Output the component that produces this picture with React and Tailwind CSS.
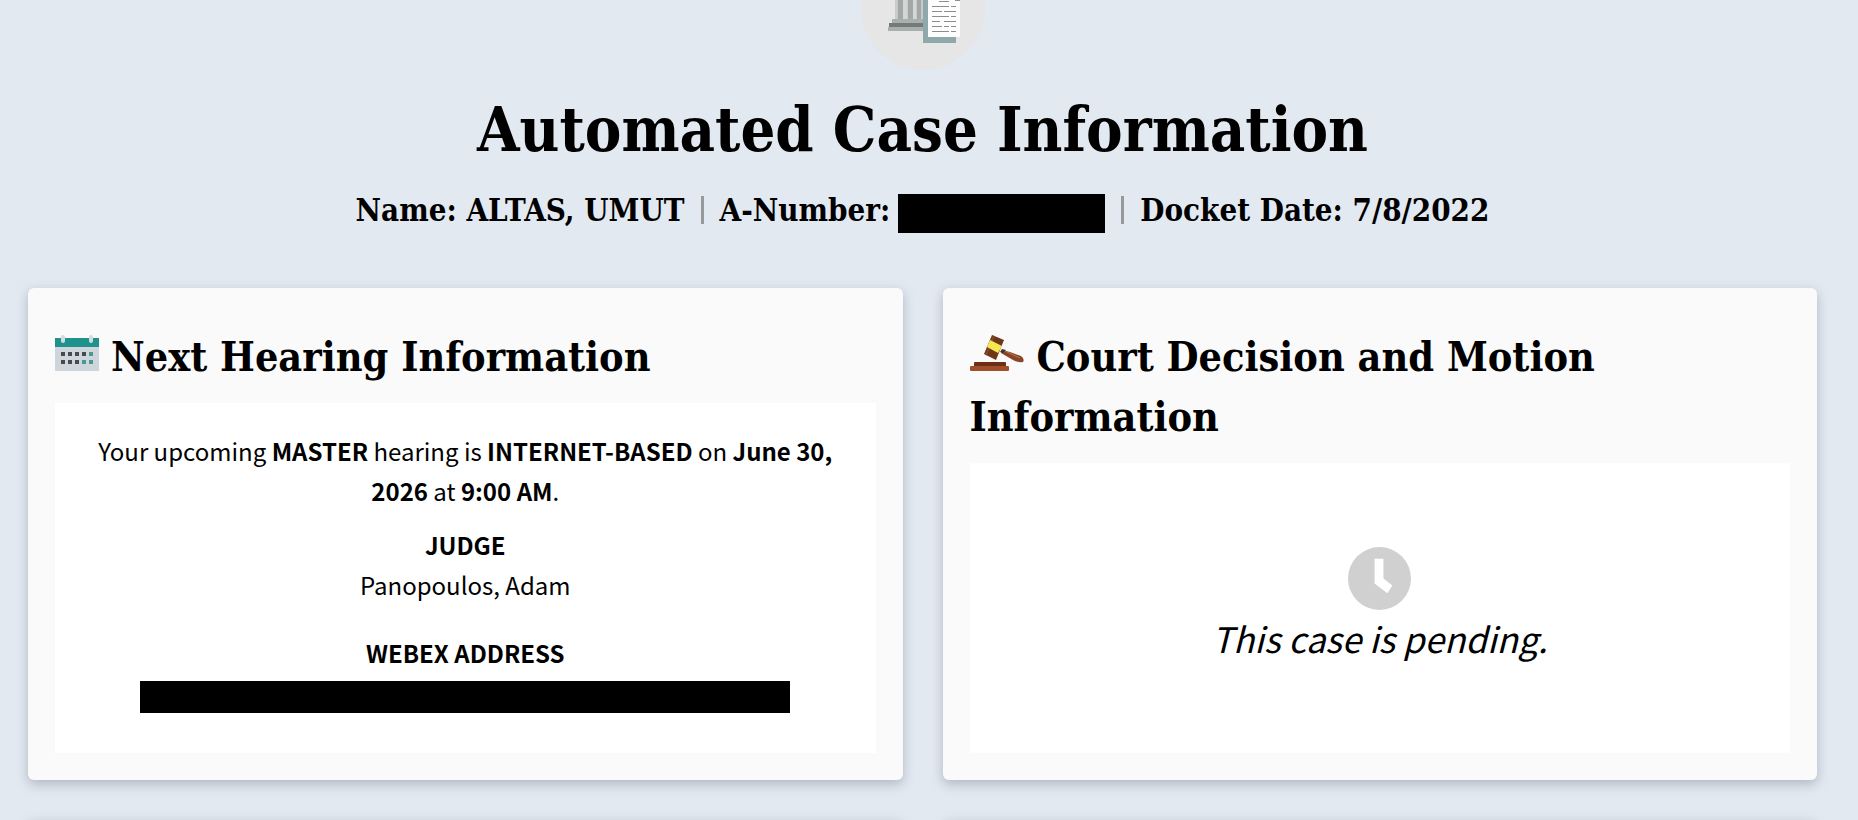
import React from 'react';

const CourtLogo = () => (
    <svg width="124" height="70" viewBox="0 0 124 70" role="img" aria-label="Court records">
        <circle cx="62" cy="8" r="62" fill="#e6e6e6" />
        <rect x="34" y="0" width="52" height="19" fill="#c9cbca" />
        <path d="M37 0h5v19h-5zM47 0h5v19h-5zM56 0h4v19h-4z" fill="#a3a8a6" />
        <path d="M42 0h4v19h-4zM52 0h3v19h-3z" fill="#d5d7d6" />
        <rect x="31" y="19" width="40" height="4" fill="#a9afac" />
        <rect x="28" y="23" width="40" height="4" fill="#747a78" />
        <rect x="27" y="27" width="40" height="4" fill="#a9afac" />
        <rect x="62" y="0" width="33" height="43" fill="#8fa8a9" />
        <rect x="67" y="0" width="32" height="37" fill="#fdfdfd" />
        <g stroke="#8c8c8c" strokeWidth="1">
            <path d="M78 1.5h10M94 0.5h5" />
            <path d="M71 6.5h17M90 6.5h5" />
            <path d="M71 11.5h10M83 11.5h12" />
            <path d="M71 16.5h17M90 16.5h5" />
            <path d="M71 21.5h8M83 21.5h12" />
            <path d="M71 26.5h10M83 26.5h5M90 26.5h5" />
            <path d="M71 31.5h17M90 31.5h5" />
        </g>
    </svg>
);

const CalendarIcon = () => (
    <svg className="mr-3 inline-block align-baseline" width="44" height="36" viewBox="0 0 44 36" aria-hidden="true">
        <rect x="0" y="3" width="44" height="33" fill="#cfd6db" />
        <rect x="0" y="3" width="44" height="9" fill="#1f938b" />
        <rect x="6" y="0" width="4" height="8" rx="2" fill="#cfdde0" />
        <rect x="34" y="0" width="4" height="8" rx="2" fill="#cfdde0" />
        <path d="M6 17h4v4h-4zM13 17h4v4h-4zM20 17h4v4h-4zM27 17h4v4h-4zM6 25h4v4h-4zM13 25h4v4h-4zM20 25h4v4h-4z" fill="#4a4a4c" />
        <path d="M34 17h4v4h-4zM27 25h4v4h-4zM34 25h4v4h-4z" fill="#4a9795" />
    </svg>
);

const GavelIcon = () => (
    <svg className="mr-3 inline-block align-baseline" width="55" height="36" viewBox="0 0 55 36" aria-hidden="true">
        <rect x="4" y="27" width="32" height="5" rx="1" fill="#6d3015" />
        <rect x="0" y="31" width="39" height="5" rx="1" fill="#a04e2c" />
        <path d="M32 15 L40 17 L51 21 Q55 24 53 27 Q49 28 43 25 L31 18 Z" fill="#8a4528" />
        <path d="M35 16 L50 23" stroke="#b47653" strokeWidth="1" />
        <path d="M22 0 L34 5 L26 25 L14 19 Z" fill="#6d3718" />
        <path d="M24 1 L16 20" stroke="#854725" strokeWidth="2" />
        <path d="M20 5 L32 11 L28 18 L17 12 Z" fill="#f8e552" />
        <path d="M32 14l4 1-3 3-3-1z" fill="#3d3a2c" />
    </svg>
);

const ClockIcon = () => (
    <svg width="63" height="63" viewBox="0 0 64 64" aria-hidden="true">
        <circle cx="32" cy="32" r="32" fill="#d0d0d0" />
        <path d="M27 12h9v20l9 7-5 8-13-10z" fill="#fff" />
    </svg>
);

const Separator = () => <span className="mx-4 h-7 w-[3px] bg-[#97999d]" />;

const Card = ({ icon, title, children }) => (
    <section className="flex flex-col rounded-md bg-[#fafafa] p-[27px] shadow-[0_4px_12px_rgba(80,90,105,0.35)]">
        <h2 className="mt-3 mb-4 font-['DejaVu_Serif_Condensed','DejaVu_Serif',serif] text-[41px] leading-[60px] font-bold">
            {icon}
            {title}
        </h2>
        <div className="flex-1 bg-white">{children}</div>
    </section>
);

const App = () => {
    return (
        <div className="h-screen overflow-hidden bg-[#e2e9f1] pr-[41px] pl-7 font-['Noto_Sans_CJK_SC',sans-serif] text-black">
            <header className="flex flex-col items-center font-['DejaVu_Serif_Condensed','DejaVu_Serif',serif] font-bold">
                <CourtLogo />
                <h1 className="mt-5 text-[61px] leading-[80px]">Automated Case Information</h1>
                <div className="mt-4 flex items-center text-[31px] leading-[40px]">
                    <span>Name: ALTAS, UMUT</span>
                    <Separator />
                    <span>A-Number:</span>
                    <span className="mt-2 ml-2 h-[39px] w-[207px] bg-black" />
                    <Separator />
                    <span>Docket Date: 7/8/2022</span>
                </div>
            </header>

            <main className="mt-[55px] grid grid-cols-2 gap-10">
                <Card icon={<CalendarIcon />} title="Next Hearing Information">
                    <div className="flex flex-col items-center px-8 pt-7 pb-10 text-center text-[24px] leading-[40px]">
                        <p>
                            Your upcoming <b>MASTER</b> hearing is <b>INTERNET-BASED</b> on <b>June 30,</b> <b>2026</b> at <b>9:00 AM</b>.
                        </p>
                        <h3 className="mt-3.5 font-bold">JUDGE</h3>
                        <p>Panopoulos, Adam</p>
                        <h3 className="mt-7 font-bold">WEBEX ADDRESS</h3>
                        <div className="mt-2 h-8 w-[650px] max-w-full bg-black" />
                    </div>
                </Card>

                <Card icon={<GavelIcon />} title="Court Decision and Motion Information">
                    <div className="flex h-full flex-col items-center justify-center pb-1">
                        <ClockIcon />
                        <p className="text-[35px] leading-[56px] italic">This case is pending.</p>
                    </div>
                </Card>
            </main>

            <div className="mt-10 grid grid-cols-2 gap-10">
                <div className="h-16 rounded-md bg-[#fafafa] shadow-[0_4px_12px_rgba(80,90,105,0.35)]" />
                <div className="h-16 rounded-md bg-[#fafafa] shadow-[0_4px_12px_rgba(80,90,105,0.35)]" />
            </div>
        </div>
    );
};

export default App;
